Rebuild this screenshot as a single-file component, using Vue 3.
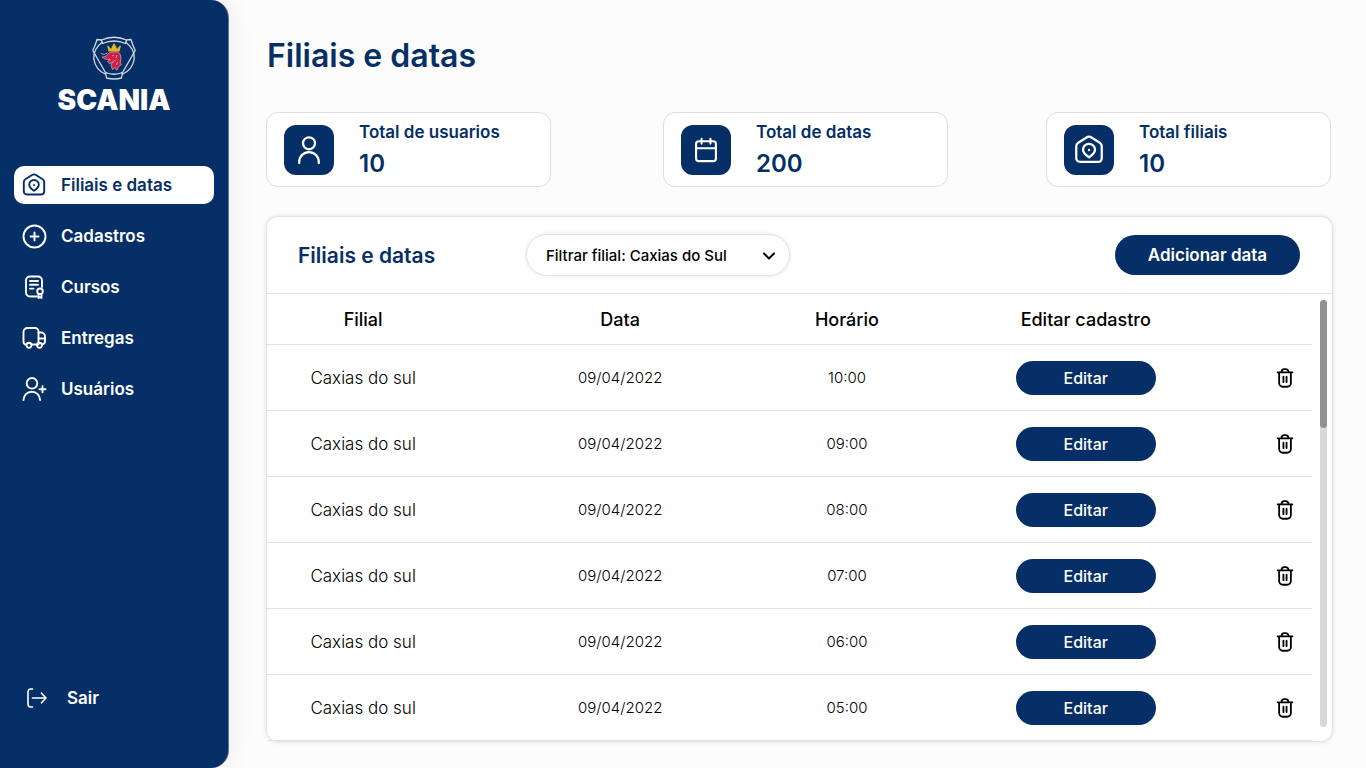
<script setup>
import { ref } from 'vue'

const nav = [
  { label: 'Filiais e datas', icon: 'home', active: true },
  { label: 'Cadastros', icon: 'plus' },
  { label: 'Cursos', icon: 'course' },
  { label: 'Entregas', icon: 'truck' },
  { label: 'Usuários', icon: 'userPlus' },
]

const stats = [
  { label: 'Total de usuarios', value: '10', icon: 'user' },
  { label: 'Total de datas', value: '200', icon: 'calendar' },
  { label: 'Total filiais', value: '10', icon: 'home' },
]

const icons = {
  home: ['M1.8 9c0-1.200.6-2.200 1.600-2.800l6.600-4.200c1.300-.8 2.700-.8 4 0l6.600 4.200c1 .6 1.600 1.600 1.600 2.800v9.300c0 2-1.200 3.200-3.200 3.200H5c-2 0-3.200-1.200-3.200-3.200z', 'M12 17.800c-2-1.400-4.800-3.200-4.800-6a4.800 4.800 0 0 1 9.600 0c0 2.800-2.800 4.600-4.800 6z', 'M12 11.900v.2'],
  plus: ['M12.500 1.500a11 11 0 1 0 0 22 11 11 0 0 0 0-22z', 'M12.500 8.500v8M8.500 12.500h8'],
  course: ['M15 21.500H8a4 4 0 0 1-4-4v-12a4 4 0 0 1 4-4h8a4 4 0 0 1 4 4V12', 'M8 6h8M8 9.800h8M8 13.600h3.500', 'M18 13.500a2.800 2.800 0 1 0 0 5.600 2.800 2.800 0 0 0 0-5.600z', 'M16.500 19v4l1.500-.8 1.500.8v-4'],
  truck: ['M4 18.500a2.500 2.500 0 0 1-2.500-2.500V6a4 4 0 0 1 4-4H13a3.500 3.500 0 0 1 3.500 3.500v13', 'M16.500 6.500H19a4 4 0 0 1 4 4V15a3.500 3.500 0 0 1-3 3.500', 'M17 12.500h6M9.500 18.500h5.500', 'M7 16.800a2.500 2.500 0 1 0 0 5 2.500 2.500 0 0 0 0-5z', 'M17.500 16.800a2.500 2.500 0 1 0 0 5 2.500 2.500 0 0 0 0-5z'],
  userPlus: ['M10 1a5.300 5.300 0 1 0 0 10.600A5.300 5.300 0 0 0 10 1z', 'M1.500 23a8.300 8.300 0 0 1 16.600 0', 'M20.500 9.200v6M17.500 12.200h6'],
  user: ['M12 1.800a4.800 4.800 0 1 0 0 9.600 4.800 4.800 0 0 0 0-9.600z', 'M4.200 22.400v-1a7.800 7.800 0 0 1 15.600 0v1'],
  calendar: ['M5.800 4.500h12.400a2.300 2.300 0 0 1 2.300 2.300v12.400a2.300 2.300 0 0 1-2.300 2.300H5.800a2.300 2.300 0 0 1-2.300-2.300V6.800a2.300 2.300 0 0 1 2.300-2.300z', 'M3.500 10.500h17M8.200 2.500v4M15.800 2.500v4'],
  exit: ['M7.500 3H6a3 3 0 0 0-3 3v12a3 3 0 0 0 3 3h1.500', 'M7.500 12H21M16.500 7.200 21 12l-4.500 4.800'],
  trash: ['M4 5.800h16M5.600 6v11.500A4 4 0 0 0 9.600 21.500h4.800a4 4 0 0 0 4-4V6', 'M8.200 5.500a3.200 3.200 0 0 1 3.200-3.200h1.200a3.200 3.200 0 0 1 3.200 3.200', 'M10.300 10.500v6M13.700 10.500v6'],
}

const rows = ['10:00', '09:00', '08:00', '07:00', '06:00', '05:00'].map((time) => ({
  branch: 'Caxias do sul',
  date: '09/04/2022',
  time,
}))

const branch = ref('caxias')
</script>

<template>
  <div class="page">
    <aside class="sidebar">
      <div class="brand">
        <svg class="crest" viewBox="0 0 44 44" aria-hidden="true">
          <g fill="none" stroke="#d5dae5" stroke-width="1.300" stroke-linejoin="round">
            <path d="M9.500 4Q22-1.500 34.500 4L33.500 7.500Q22 2.500 10.500 7.500Z" />
            <path d="M9.500 4 5 3.500Q3.500 9 .8 14.500L14 37.500M34.500 4 39 3.500Q40.500 9 43.200 14.500L30 37.500" />
            <path d="M10.500 6Q1 13 1.800 23 3.500 34 14 38.500M33.500 6Q43 13 42.200 23 40.500 34 30 38.500" />
            <path d="M13.500 36.500Q22 40 30.500 36.500L29.500 42Q22 44 14.500 42Z" />
          </g>
          <path d="M15 9.500 17 10.500 19 13 20 10.500 22 7l2 3.500 1 2.500 2-2.500 2-1L27.500 15.500h-11Z" fill="#e5b822" />
          <path d="m17.500 16.500 7.500-.8 3 2 1 4-.5 5 .8 2-2.800 2-1.500 3.500-3-2.500-1.500 2-1.500-4.500 1.500-3-3 1.500-2-2.500 3-1.500-5-.5-3.500-2 4-1z" fill="#d01f47" stroke="#dbc8da" stroke-width=".6" />
          <path d="M9 17.500q3 2 6.500-.5M20 20l2-1M24 22l1-3M20.500 26l3-2M24 29l2-3" fill="none" stroke="#c9b6cd" stroke-width=".8" />
        </svg>
        <span class="wordmark">SCANIA</span>
      </div>
      <nav class="menu">
        <a v-for="item in nav" :key="item.label" href="#" class="link" :class="{ active: item.active }">
          <svg class="icon nav-icon" viewBox="0 0 24 24" aria-hidden="true">
            <path v-for="d in icons[item.icon]" :key="d" :d="d" />
          </svg>
          {{ item.label }}
        </a>
      </nav>
      <a href="#" class="link exit">
        <svg class="icon nav-icon" viewBox="0 0 24 24" aria-hidden="true">
          <path v-for="d in icons.exit" :key="d" :d="d" />
        </svg>
        Sair
      </a>
    </aside>

    <main class="content">
      <h1>Filiais e datas</h1>

      <section class="stats">
        <article v-for="stat in stats" :key="stat.label" class="stat">
          <div class="tile">
            <svg class="icon" :class="'stat-' + stat.icon" viewBox="0 0 24 24" aria-hidden="true">
              <path v-for="d in icons[stat.icon]" :key="d" :d="d" />
            </svg>
          </div>
          <div>
            <div class="stat-label">{{ stat.label }}</div>
            <div class="stat-value">{{ stat.value }}</div>
          </div>
        </article>
      </section>

      <section class="panel">
        <header class="panel-head">
          <h2>Filiais e datas</h2>
          <div class="filter">
            <select v-model="branch" aria-label="Filtrar filial">
              <option value="caxias">Filtrar filial: Caxias do Sul</option>
            </select>
            <svg class="chevron" viewBox="0 0 14 14" aria-hidden="true"><path d="m2 4.500 5 5 5-5" /></svg>
          </div>
          <button type="button" class="add">Adicionar data</button>
        </header>
        <div class="panel-body">
          <table>
            <colgroup>
              <col class="c-branch" /><col class="c-date" /><col class="c-time" /><col class="c-edit" /><col class="c-del" />
            </colgroup>
            <thead>
              <tr><th>Filial</th><th>Data</th><th>Horário</th><th>Editar cadastro</th><td></td></tr>
            </thead>
            <tbody>
              <tr v-for="row in rows" :key="row.time">
                <td class="branch">{{ row.branch }}</td>
                <td>{{ row.date }}</td>
                <td>{{ row.time }}</td>
                <td><button type="button" class="edit">Editar</button></td>
                <td>
                  <button type="button" class="trash" aria-label="Excluir">
                    <svg class="icon" viewBox="0 0 24 24" aria-hidden="true">
                      <path v-for="d in icons.trash" :key="d" :d="d" />
                    </svg>
                  </button>
                </td>
              </tr>
            </tbody>
          </table>
          <div class="track"><div class="thumb"></div></div>
        </div>
      </section>
    </main>
  </div>
</template>

<style>
body {
  background: #fcfcfc;
}
</style>

<style scoped>
.page,
.page * {
  box-sizing: border-box;
}
.page {
  display: flex;
  min-height: 100vh;
  font-family: Inter, "Open Sans", sans-serif;
  color: #000;
}
.sidebar {
  flex: none;
  display: flex;
  flex-direction: column;
  width: 229px;
  padding: 36px 14px 51px;
  background: #052f66;
  border-right: 1px solid #5c7598;
  border-radius: 0 18px 18px 0;
  box-shadow: 4px 0 24px rgba(0, 0, 0, 0.06);
}
.brand {
  display: flex;
  flex-direction: column;
  align-items: center;
  color: #fff;
}
.crest {
  width: 44px;
  height: 44px;
}
.wordmark {
  margin-top: 6px;
  font-size: 28px;
  font-weight: 900;
  line-height: 28px;
}
.menu {
  display: flex;
  flex-direction: column;
  gap: 13px;
  margin-top: 52px;
}
.link {
  display: flex;
  align-items: center;
  gap: 15px;
  height: 38px;
  padding: 0 8px;
  border-radius: 10px;
  color: #fff;
  font-size: 17px;
  font-weight: 600;
  text-decoration: none;
}
.link.active {
  background: #fff;
  color: #052f66;
}
.exit {
  margin-top: auto;
  padding-left: 11px;
  gap: 18px;
}
.icon {
  display: block;
  overflow: visible;
  fill: none;
  stroke: currentColor;
  stroke-width: 2;
  stroke-linecap: round;
  stroke-linejoin: round;
}
.nav-icon {
  width: 24px;
  height: 24px;
  stroke-width: 1.9;
}
.exit .nav-icon {
  stroke-width: 1.6;
}
.content {
  flex: 1;
  min-width: 0;
  padding: 36px 33px 24px 37px;
}
h1 {
  margin: 0 0 36px 1px;
  font-size: 32px;
  font-weight: 600;
  line-height: 40px;
  color: #052f66;
}
.stats {
  display: grid;
  grid-template-columns: 397fr 383fr 285px;
  margin-right: 2px;
}
.stat {
  display: flex;
  align-items: center;
  gap: 25px;
  width: 285px;
  height: 75px;
  padding: 0 17px;
  background: #fff;
  border: 1px solid #dcdde6;
  border-radius: 12px;
  color: #052f66;
}
.tile {
  display: grid;
  place-items: center;
  width: 50px;
  height: 50px;
  border-radius: 12px;
  background: #052f66;
  color: #fff;
}
.tile .icon {
  width: 30px;
  height: 30px;
  stroke-width: 1.8;
}
.tile .stat-calendar {
  width: 28px;
  height: 28px;
}
.stat-label {
  font-size: 17px;
  font-weight: 600;
  line-height: 26px;
}
.stat-value {
  margin-top: 2px;
  font-size: 24px;
  font-weight: 600;
  line-height: 34px;
}
.panel {
  margin-top: 29px;
  background: #fff;
  border: 1px solid #e4e4e4;
  border-radius: 12px;
  box-shadow: 0 0 4px rgba(0, 0, 0, 0.12);
}
.panel-head {
  display: flex;
  align-items: center;
  height: 77px;
  padding: 0 32px 0 31px;
  border-bottom: 1px solid #e0e1e3;
}
h2 {
  width: 228px;
  margin: 0;
  font-size: 21px;
  font-weight: 600;
  color: #052f66;
}
.filter {
  position: relative;
  width: 264px;
}
.filter select {
  width: 100%;
  height: 42px;
  padding: 0 40px 0 19px;
  appearance: none;
  background: #fff;
  border: 1px solid #e4e4e4;
  border-radius: 21px;
  box-shadow: 0 0 4px rgba(0, 0, 0, 0.1);
  color: #000;
  font: 500 15px Inter, sans-serif;
}
.chevron {
  position: absolute;
  top: 15px;
  right: 14px;
  width: 14px;
  height: 14px;
  fill: none;
  stroke: #000;
  stroke-width: 2;
  stroke-linecap: round;
  stroke-linejoin: round;
  pointer-events: none;
}
.add {
  width: 185px;
  height: 40px;
  margin-left: auto;
  border: 0;
  border-radius: 20px;
  background: #052f66;
  color: #fff;
  font: 600 17px Inter, sans-serif;
}
.panel-body {
  display: flex;
  gap: 8px;
  padding-right: 5px;
}
table {
  flex: 1;
  table-layout: fixed;
  border-collapse: separate;
  border-spacing: 0;
}
.c-branch { width: 18.4%; }
.c-date { width: 30.8%; }
.c-time { width: 12.6%; }
.c-edit { width: 33.1%; }
.c-del { width: 5.1%; }
th,
td {
  padding: 0;
  text-align: center;
  border-bottom: 1px solid #e0e1e3;
}
th {
  height: 51px;
  font-size: 18px;
  font-weight: 500;
}
tbody td {
  height: 66px;
  font-size: 15px;
  font-weight: 300;
}
tbody .branch {
  font-size: 17px;
}
.edit {
  width: 140px;
  height: 34px;
  border: 0;
  border-radius: 17px;
  background: #052f66;
  color: #fff;
  font: 500 16px Inter, sans-serif;
}
.trash {
  display: block;
  margin: 0 auto;
  padding: 0;
  border: 0;
  background: none;
  color: #000;
}
.trash .icon {
  width: 22px;
  height: 22px;
}
.track {
  width: 7px;
  margin: 6px 0 14px;
  border-radius: 4px;
  background: #d9d9d9;
}
.thumb {
  height: 30%;
  border-radius: 4px;
  background: #909090;
}
</style>
